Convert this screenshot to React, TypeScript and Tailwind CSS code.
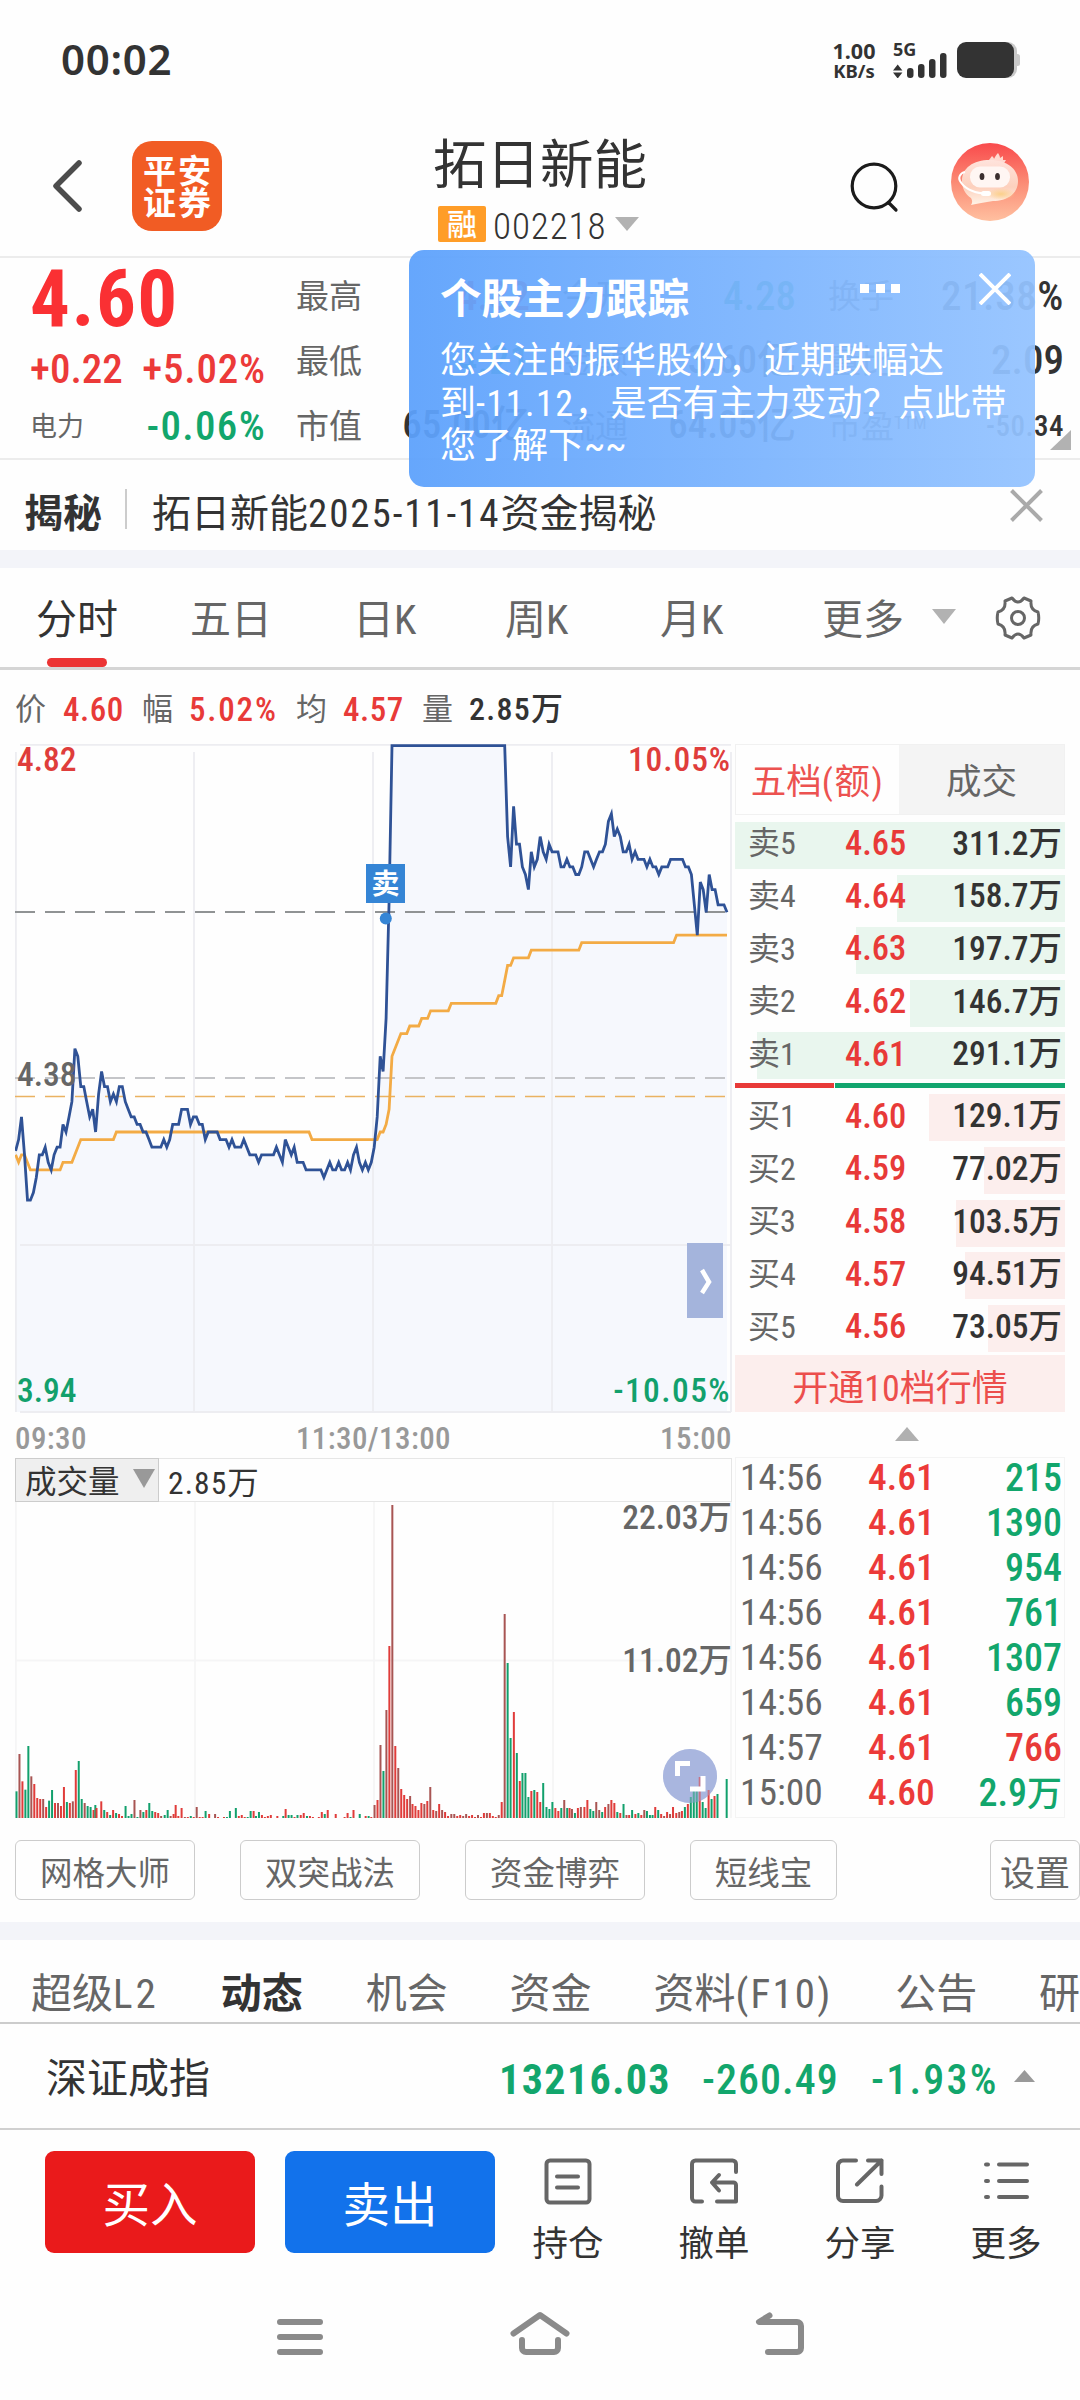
import React from "react";

type Pt = [number, number];

/* [minute of session, price in cents] */
const PRICE: Pt[] = [
  [0, 428.5], [1, 430], [2, 433], [3, 428], [4, 422], [5, 422], [6, 423], [7, 425], [8, 428], [9, 428], [10, 429], [11, 427], [12, 426], [13, 428], [14, 429], [15, 429],
  [16, 432], [17, 431], [18, 433], [19, 435], [20, 442], [21, 441], [22, 437], [23, 437], [24, 435], [25, 433], [26, 434], [27, 431], [28, 436], [29, 439], [30, 437], [31, 437],
  [32, 435], [33, 436], [34, 435], [35, 437], [36, 437], [37, 435], [38, 434], [39, 433], [40, 433], [41, 432], [42, 432], [43, 431], [44, 431], [45, 430], [46, 429], [49, 429],
  [50, 430], [51, 429], [52, 430], [53, 432], [55, 432], [56, 434], [58, 434], [59, 432], [60, 433], [61, 433], [62, 432], [63, 432], [64, 430], [65, 431], [68, 431], [69, 430],
  [71, 430], [72, 429], [73, 430], [74, 429], [76, 429], [77, 430], [78, 429], [79, 428], [81, 428], [82, 427], [83, 428], [87, 428], [88, 429], [89, 428], [90, 427], [91, 430],
  [92, 429], [93, 428], [94, 429], [95, 427], [97, 427], [98, 426], [103, 426], [104, 425], [105, 426], [106, 427], [107, 426], [108, 426], [109, 427], [110, 426], [111, 426],
  [112, 427], [113, 426], [114, 428], [115, 429], [116, 427], [117, 426], [118, 427], [119, 426], [120, 427], [121, 429], [122, 433], [123, 441], [124, 439], [125, 446],
  [126, 461.5], [127, 482], [165, 482], [166, 470], [167, 466], [168, 474], [169, 469], [170, 469], [171, 466], [172, 465], [173, 463], [174, 468], [175, 466], [176, 467],
  [177, 470], [178, 468], [179, 467], [180, 469], [181, 468], [183, 468], [184, 466], [185, 466], [186, 467], [187, 466], [188, 466], [189, 465], [190, 465], [191, 466],
  [192, 468], [193, 468], [194, 467], [195, 466], [196, 467], [197, 468], [198, 468], [199, 469], [200, 472], [201, 473], [202, 470], [203, 471], [204, 470], [205, 468],
  [206, 468], [207, 469], [208, 467], [209, 468], [210, 467], [212, 467], [213, 466], [214, 467], [215, 466], [216, 466], [217, 465], [218, 466], [220, 466], [221, 467],
  [225, 467], [226, 466], [227, 466], [228, 465], [230, 457], [231, 464], [232, 463], [233, 460], [234, 465], [235, 463], [236, 463], [237, 461], [239, 461], [240, 460],
];

const AVERAGE: Pt[] = [
  [0, 428], [1, 427], [2, 428], [3, 428], [5, 426], [15, 426], [16, 427], [19, 427], [22, 430], [33, 430], [34, 431], [99, 431], [100, 430], [122, 430], [123, 431], [124, 431],
  [125, 432], [126, 434], [127, 441], [130, 444], [132, 444], [133, 445], [136, 445], [137, 446], [139, 446], [140, 447], [146, 447], [147, 448], [162, 448], [163, 449],
  [164, 449], [165, 451], [166, 453], [167, 453], [168, 454], [173, 454], [174, 455], [190, 455], [191, 456], [222, 456], [223, 457], [240, 457],
];

/* minute, side (r up, g down, d overlapping) and height */
const VOLUME =
  "0g80 1d192 2r110 3g85 4g216 5d125 6r102 7r60 8r57 9d57 10r33 11g52 12g84 13r45 14d45 15r36 16r93 17g48 18r45 19d50 20r144 21g171 22g57 23d45 24g36 25g33 26r24 26.6g39 27r30 28.6r50 29.6g24 30.6r18 31.6g9 32.6r24 33.6g15 34.6r12 35.6r6 36.8g36 37.8g6 38.8g12 39.8d54 40.8g3 41.8d24 42.8g18 43.8r24 44.8g45 45.8g21 46.8r18 47.8r15 48.8d6 50g9 51g24 52d6 53r12 53.7r39 54.6r6 55.7r30 56.8d3 57.8r3 58.8g6 59.8r3 60.8d33 61.8r3 62.8r3 63.8g21 65r12 67d12 68r3 70r3 71g3 72g21 74g30 75r6 76r9 77r3 78g3 79g21 80r21 80.8g6 81.8g18 82.8r9 83.8r3 84.8r6 85.8r9 88r6 90g6 90.8r27 91.8g9 92.8g9 93.8r3 94.8g9 95.9r9 96.9r15 98g6 99r6 100r3 102r3 103r18 104g12 105r24 107.7r12 110.7r3 111.7r15 112.7g3 113.7r24 115.8g12 117.8r6 118.8g6 119.7r3 120.8d39 121.8r54 122.8d219 123.8g141 124.8d324 125.8r516 126.8d939 127.8r216 128.8d150 129.8r87 130.8r69 131.8r57 132.8d66 133.6r42 134.6r36 135.6r24 136.6r45 137.6d42 138.6r51 139.6d93 140.6r24 141.6d21 142.6r42 143.6d24 144.6r18 145.6r6 146.7d12 147.7d12 148.7r6 149.7r9 150.7d6 151.7d12 152.7r6 153.7r9 154.7r3 155.7d9 156.7r3 157.7r15 158.7d15 159.7r15 160.7r6 161.7r3 162.7d9 163.7r48 164.7d612 165.7g465 166.7g240 167.8r318 168.8g195 169.8r111 170.7g135 171.7g135 172.7g63 173.7r81 174.7g84 175.7r78 176.7r48 177.7g105 178.8g33 179.8g27 180.8g48 181.8r30 182.8r21 183.8g30 184.8d54 185.8g30 186.6r30 187.4d27 188.4g15 189.4r30 190.4d33 191.6r33 192.6r54 193.6g27 194.6g21 195.6d48 196.6d24 197.6g18 198.6r33 199.7d42 200.7r54 201.7r45 202.7g18 203.7r15 204.8g42 205.8d9 206.7r9 207.7g24 208.8r12 209.8g15 210.8r9 211.8d24 212.7g21 213.7g9 214.6g9 215.5r33 216.5g24 217.5r12 218.5d6 219.5r18 220.5d12 221.5r33 222.6r15 223.6d18 224.5r21 225.5g33 226.5r42 227.5g63 228.5g81 229.5g81 230.5r123 231.5g48 232.5g30 233.5r84 234.5g57 235.5r66 236.5g72 239.6g117"
    .split(" ")
    .map((s) => {
      const m = /^([\d.]+)([rgd])(\d+)$/.exec(s)!;
      return { minute: +m[1], side: m[2], height: +m[3] / 3 };
    });

const BAR_FILL: Record<string, string> = { r: "#e03c3a", g: "#12a06c", d: "#a85553" };

const px = (m: number) => 0.6 + m * 2.964;
const py = (c: number) => 335 - (c - 438) * 7.575;
const line = (pts: Pt[]) => pts.map(([m, c]) => `${px(m).toFixed(1)},${py(c).toFixed(1)}`).join(" ");

const SELL = [
  ["卖5", "4.65", "311.2万", 330],
  ["卖4", "4.64", "158.7万", 168],
  ["卖3", "4.63", "197.7万", 209],
  ["卖2", "4.62", "146.7万", 155],
  ["卖1", "4.61", "291.1万", 308],
] as const;
const BUY = [
  ["买1", "4.60", "129.1万", 136],
  ["买2", "4.59", "77.02万", 81],
  ["买3", "4.58", "103.5万", 109],
  ["买4", "4.57", "94.51万", 100],
  ["买5", "4.56", "73.05万", 77],
] as const;
const TRADES = [
  ["14:56", "4.61", "215", false],
  ["14:56", "4.61", "1390", false],
  ["14:56", "4.61", "954", false],
  ["14:56", "4.61", "761", false],
  ["14:56", "4.61", "1307", false],
  ["14:56", "4.61", "659", false],
  ["14:57", "4.61", "766", true],
  ["15:00", "4.60", "2.9万", false],
] as const;

function Triangle({ up, className }: { up?: boolean; className: string }) {
  return (
    <svg viewBox="0 0 10 10" preserveAspectRatio="none" className={className} fill="currentColor">
      <path d={up ? "M0 10L5 0L10 10Z" : "M0 0H10L5 10Z"} />
    </svg>
  );
}

function StatusBar() {
  return (
    <div className="flex h-[118px] items-center pl-[61px] pr-[59px] text-[#333]">
      <span className="font-['Noto_Sans'] text-[42px] leading-none font-semibold tracking-[0.7px]">00:02</span>
      <div className="mt-[2px] ml-auto flex w-[46px] flex-col items-center font-['Noto_Sans'] font-bold">
        <span className="text-[21.5px] leading-[20px]">1.00</span>
        <span className="text-[18.5px] leading-[19px]">KB/s</span>
      </div>
      <svg className="ml-[16px] h-[38px] w-[56px]" viewBox="0 0 56 38" fill="#333">
        <text x="0" y="15.5" fontSize="18" fontWeight="700" fontFamily="Noto Sans">5G</text>
        <path d="M0 30.5L4.7 24.500L9.400 30.500Z M0 32.500H9.400L4.700 38.500Z" />
        <rect x="14" y="28" width="6.500" height="10" rx="3" />
        <rect x="25" y="24" width="6.500" height="14" rx="3" />
        <rect x="36" y="19" width="6.500" height="19" rx="3" />
        <rect x="47" y="13" width="6.500" height="25" rx="3" />
      </svg>
      <svg className="mt-[2px] ml-[8px] h-[36px] w-[64px]" viewBox="0 0 64 36">
        <rect x="10" width="50" height="36" rx="9" fill="#c9c9c9" />
        <rect x="56" y="12" width="7" height="12" rx="2.500" fill="#c9c9c9" />
        <rect width="57" height="36" rx="9" fill="#333" />
      </svg>
    </div>
  );
}

function Assistant() {
  return (
    <svg viewBox="0 0 78 78" className="h-[78px] w-[78px]">
      <defs>
        <linearGradient id="as-bg" x1="0" y1="0" x2="0" y2="1">
          <stop offset="0" stopColor="#f94a4c" />
          <stop offset="0.500" stopColor="#fb8a74" />
          <stop offset="1" stopColor="#ffc0a0" />
        </linearGradient>
        <linearGradient id="as-head" x1="0" y1="0" x2="0" y2="1">
          <stop offset="0" stopColor="#ffe3dc" />
          <stop offset="0.600" stopColor="#fdd0bd" />
          <stop offset="1" stopColor="#fff4e8" />
        </linearGradient>
        <radialGradient id="as-glow">
          <stop offset="0" stopColor="#fbd08a" />
          <stop offset="1" stopColor="#fbd08a" stopOpacity="0" />
        </radialGradient>
      </defs>
      <circle cx="39" cy="39" r="39" fill="url(#as-bg)" />
      <path d="M37 19c1-3 3-4 4-6 1 1 2 2 2 3 1-2 2-4 4-6 1 2 2 3 2 5l3-2c0 2 0 3 0 4l3 0c-1 2-2 3-3 5z" fill="#ffd9d0" />
      <path d="M39 17C56 17 67 26 67 38C67 51 56 58 42 58C34 59 26 61 20 62C22 59 21 57 20 55C14 51 11 45 11 38C11 25 22 17 39 17Z" fill="url(#as-head)" />
      <ellipse cx="50" cy="51" rx="14" ry="6" fill="url(#as-glow)" />
      <rect x="19" y="23.500" width="40" height="21" rx="10" fill="#fff6f3" />
      <ellipse cx="31" cy="33.500" rx="2.400" ry="3.500" fill="#3b2f2f" />
      <ellipse cx="46.500" cy="33.500" rx="2.400" ry="3.500" fill="#3b2f2f" />
      <path d="M14 29C9 30 7 35 9 38C13 45 22 50 32 50.500" fill="none" stroke="#fff" strokeWidth="2" />
      <rect x="30" y="48" width="10" height="5" rx="2.500" fill="#fff" />
    </svg>
  );
}

function Header() {
  return (
    <div className="flex h-[140px] border-b-2 border-[#ececec]">
      <svg className="mt-[42px] ml-[50px] h-[52px] w-[36px]" viewBox="0 0 36 52" fill="none" stroke="#4c4c4c" strokeWidth="5.500" strokeLinecap="round" strokeLinejoin="round">
        <path d="M29 3L6 26L29 49" />
      </svg>
      <div className="mt-[23px] ml-[46px] flex h-[90px] w-[90px] flex-col items-center justify-center rounded-[20px] bg-[#f15c24] pt-[3px] pl-[2px] text-[33px] leading-[31.5px] font-bold tracking-[2px] text-white">
        <span>平安</span>
        <span>证券</span>
      </div>
      <div className="ml-[211px] w-[222px]">
        <div className="mt-[18px] text-[53.5px] leading-[60px] text-[#333]">拓日新能</div>
        <div className="mt-[10px] ml-[5px] flex h-[36px] items-center">
          <span className="flex h-[36px] w-[48px] items-center justify-center rounded-[2px] bg-[#ff9d28] pt-[2px] text-[30px] leading-none font-medium text-white">融</span>
          <span className="mt-[4px] ml-[7px] text-[37px] leading-none font-light tracking-[0.9px] text-[#333]">002218</span>
          <Triangle className="ml-[9px] h-[14px] w-[24px] shrink-0 text-[#b2b2b2]" />
        </div>
      </div>
      <svg className="mt-[43px] ml-[195px] h-[52px] w-[50px]" viewBox="0 0 50 52" fill="none" stroke="#1b1b1b" strokeWidth="3.200" strokeLinecap="round">
        <circle cx="24" cy="25" r="21.800" />
        <path d="M39 42L46 49" />
      </svg>
      <div className="mt-[25px] ml-[51px]">
        <Assistant />
      </div>
    </div>
  );
}

function Popup() {
  return (
    <div className="absolute top-[-8px] left-[409px] h-[237px] w-[626px] rounded-[15px] bg-linear-to-r from-[#5ca1fc]/94 to-[#94c3ff]/94 text-white">
      <div className="flex items-start pt-[23px] pl-[31px]">
        <span className="w-[420px] pt-[2px] text-[41.5px] leading-[50px] font-bold">个股主力跟踪</span>
        <div className="mt-[11px] flex gap-[6.5px]">
          <span className="h-[9px] w-[9px] bg-white" />
          <span className="h-[9px] w-[9px] bg-white" />
          <span className="h-[9px] w-[9px] bg-white" />
        </div>
        <svg className="ml-[79px] h-[32px] w-[32px]" viewBox="0 0 32 32" stroke="#fff" strokeWidth="4">
          <path d="M1 1L31 31M31 1L1 31" />
        </svg>
      </div>
      <div className="mt-[15px] pl-[31px] text-[36px] leading-[42.500px] whitespace-nowrap">
        <div>您关注的振华股份，近期跌幅达</div>
        <div>
          到<span className="tracking-[1.5px]">-11.12</span>，是否有主力变动？点此带
        </div>
        <div>您了解下~~</div>
      </div>
    </div>
  );
}

function Quote() {
  return (
    <div className="relative flex h-[202px] border-b-2 border-[#ececec] text-[#666]">
      <div className="ml-[30px] flex w-[236px] flex-col">
        <div className="mt-[1px] text-[79px] leading-[80px] font-bold tracking-[1.5px] text-[#fa3033]">4.60</div>
        <div className="mt-[9px] flex justify-between text-[41px] leading-[42px] font-medium text-[#ec3a39]">
          <span>+0.22</span>
          <span className="tracking-[0.8px]">+5.02%</span>
        </div>
        <div className="mt-[13px] flex items-center justify-between">
          <span className="pt-[3px] text-[27px] leading-[42px]">电力</span>
          <span className="text-[41px] leading-[42px] font-medium tracking-[1.3px] text-[#12a66c]">-0.06%</span>
        </div>
      </div>
      <div className="mt-[15px] ml-[30px] grid h-[176px] w-[768px] grid-cols-[66px_168px_32px_66px_168px_32px_66px_170px] grid-rows-[47px_65px_64px] text-[33px] leading-[47px]">
        <span>最高</span>
        <span className="text-right text-[41px] font-medium text-[#ec3a39]">4.82</span>
        <span />
        <span>今开</span>
        <span className="text-right text-[41px] font-medium text-[#12a66c]">4.28</span>
        <span />
        <span>换手</span>
        <span className="text-right text-[41px] font-medium tracking-[0.6px] text-[#333]">21.38%</span>
        <span className="pt-[18px]">最低</span>
        <span className="pt-[17px] text-right text-[41px] font-medium text-[#12a66c]">4.21</span>
        <span />
        <span className="pt-[18px]">金额</span>
        <span className="pt-[17px] text-right text-[39px] font-medium text-[#333]">3.60亿</span>
        <span />
        <span className="pt-[18px]">量比</span>
        <span className="pt-[17px] text-right text-[41px] font-medium text-[#333]">2.09</span>
        <span className="pt-[18px]">市值</span>
        <span className="pt-[17px] text-right text-[39px] font-medium whitespace-nowrap text-[#333]">65.00亿</span>
        <span />
        <span className="pt-[18px]">流通</span>
        <span className="pt-[17px] text-right text-[39px] font-medium whitespace-nowrap text-[#333]">64.05亿</span>
        <span />
        <span className="pt-[18px] whitespace-nowrap">
          市盈<sup className="text-[18px]">TTM</sup>
        </span>
        <span className="pt-[18px] text-right text-[29px] font-medium tracking-[0.5px] text-[#333]">-50.34</span>
      </div>
      <svg className="absolute top-[172px] left-[1050px] h-[20px] w-[21px]" viewBox="0 0 21 20">
        <path d="M21 0V20H0Z" fill="#b2b2b2" />
      </svg>
      <Popup />
    </div>
  );
}

function PriceChart() {
  const area = `0.6,668 ${line(PRICE)} ${px(240)},668`;
  return (
    <svg width="717" height="669" viewBox="0 0 717 669" className="font-medium">
      <polygon points={area} fill="#f6f8fd" />
      <g stroke="#ededf1" strokeWidth="1.800" fill="none">
        <path d="M5 0.900H716M5 501H716M5 668H716" />
        <path d="M0.900 8V668M179 8V668M358 8V668M537 8V668M716 8V668" />
      </g>
      <g fill="none" strokeDasharray="20 10">
        <path d="M0 168H712" stroke="#909394" strokeWidth="2" />
        <path d="M0 334H712" stroke="#c4c5c8" strokeWidth="2" />
        <path d="M0 352.500H712" stroke="#eab262" strokeWidth="1.500" />
      </g>
      <polyline points={line(AVERAGE)} fill="none" stroke="#f3ab45" strokeWidth="2.800" />
      <polyline points={line(PRICE)} fill="none" stroke="#2f5296" strokeWidth="2.800" />
      <g fontSize="33.500">
        <text x="2" y="26.500" fill="#df3d3b">4.82</text>
        <text x="716" y="26.500" fill="#df3d3b" textAnchor="end" letterSpacing="0.900">10.05%</text>
        <text x="2" y="342" fill="#666">4.38</text>
        <text x="2" y="658" fill="#12a06c">3.94</text>
        <text x="716" y="658" fill="#12a06c" textAnchor="end" letterSpacing="1.400">-10.05%</text>
      </g>
      <rect x="351" y="120" width="39" height="39" fill="#3585d5" />
      <text x="370.500" y="150" fontSize="28" fill="#fff" textAnchor="middle" fontWeight="700">卖</text>
      <circle cx="370.800" cy="174.500" r="6" fill="#3585d5" />
      <rect x="672" y="499" width="36" height="75" fill="#a4b4dc" />
      <path d="M687 526L694 538L687 549" fill="none" stroke="#fff" strokeWidth="4.500" />
    </svg>
  );
}

function VolumeChart() {
  return (
    <svg width="717" height="316" viewBox="0 0 717 316" className="font-medium">
      <path d="M0.900 0V316M180 0V316M359 0V316M538 0V316M716 0V316M0 158.500H716" stroke="#f5f5f6" strokeWidth="1.800" fill="none" />
      <circle cx="675" cy="274" r="27" fill="#a9b6df" />
      {VOLUME.map((b) => (
        <rect key={b.minute} x={0.5 + b.minute * 2.964} y={316 - b.height} width="2" height={b.height} fill={BAR_FILL[b.side]} />
      ))}
      <circle cx="675" cy="274" r="27" fill="#a9b6df" opacity="0.450" />
      <path d="M662.500 274V261.500H675M675 287H688V274" fill="none" stroke="#fff" strokeWidth="5" />
      <g fontSize="33.500" fill="#666" textAnchor="end">
        <text x="717" y="27">22.03万</text>
        <text x="717" y="170">11.02万</text>
      </g>
    </svg>
  );
}

function BookRow({ row, sell }: { row: readonly [string, string, string, number]; sell?: boolean }) {
  const [label, price, amount, width] = row;
  return (
    <div className="relative h-[47px]">
      <div className={`absolute inset-y-0 right-0 ${sell ? "bg-[#e9f6ee]" : "bg-[#fceeed]"}`} style={{ width }} />
      <div className="relative flex h-[43px] items-center pr-[3px] pl-[13px] leading-none">
        <span className="w-[97px] text-[32px] text-[#666]">{label}</span>
        <span className="text-[34.500px] font-medium text-[#e83a38]">{price}</span>
        <span className="ml-auto flex items-center text-[33.500px] font-medium text-[#333]">{amount}</span>
      </div>
    </div>
  );
}

function OrderBook() {
  return (
    <div className="ml-[3px] flex w-[330px] flex-col">
      <div className="flex h-[71px] border border-[#f1f1f1] text-[35.500px] leading-none">
        <span className="flex w-[163px] items-center justify-center pt-[7px] text-[#ec5250]">
          五档<span className="tracking-[1.5px]">(额)</span>
        </span>
        <span className="flex flex-1 items-center justify-center bg-[#f4f4f4] pt-[7px] text-[#666]">成交</span>
      </div>
      <div className="mt-[7px] flex h-[258px] flex-col justify-between">
        {SELL.map((r) => (
          <BookRow key={r[0]} row={r} sell />
        ))}
      </div>
      <div className="mt-[3px] flex h-[6px] gap-px">
        <span className="w-[99px] bg-[#e83a38]" />
        <span className="flex-1 bg-[#12a56e]" />
      </div>
      <div className="mt-[6px] flex h-[258px] flex-col justify-between">
        {BUY.map((r) => (
          <BookRow key={r[0]} row={r} />
        ))}
      </div>
      <div className="mt-[3px] flex h-[57px] items-center justify-center bg-[#fceeed] pt-[10px] text-[36px] leading-none text-[#ec4e4c]">开通10档行情</div>
      <div className="flex h-[45px] justify-center pt-[15px] pl-[14px]">
        <Triangle up className="h-[14px] w-[24px] text-[#b0b0b0]" />
      </div>
      <div className="h-[361px] border border-[#f4f4f4]">
        {TRADES.map(([t, p, v, up], i) => (
          <div key={i} className="relative top-[-2.5px] flex h-[45px] items-center pr-[2px] pl-[4px] text-[38px] leading-none">
            <span className="w-[128px] text-[37.500px] text-[#666]">{t}</span>
            <span className="text-[37.500px] font-medium text-[#ec3a39]">{p}</span>
            <span className={`ml-auto font-medium ${up ? "text-[#e83a38]" : "text-[#12a66c]"}`}>
              {v.replace("万", "")}
              {v.endsWith("万") && <span className="text-[35px]">万</span>}
            </span>
          </div>
        ))}
      </div>
    </div>
  );
}

function PeriodTabs() {
  return (
    <div className="flex h-[102px] border-b-[3px] border-[#d5d5d5] text-[41px] leading-[104px] whitespace-nowrap text-[#666]">
      <div className="relative ml-[36px] w-[154px] text-[#333]">
        分时
        <span className="absolute bottom-0 left-[11px] h-[9px] w-[60px] rounded-full bg-[#ec3434]" />
      </div>
      <span className="w-[163px]">五日</span>
      <span className="w-[152px]">日K</span>
      <span className="w-[155px]">周K</span>
      <span className="w-[162px]">月K</span>
      <span className="w-[110px]">更多</span>
      <Triangle className="mt-[41px] h-[15px] w-[24px] text-[#b2b2b2]" />
      <svg className="mt-[27px] ml-[39px] h-[46px] w-[46px]" viewBox="-23 -23 46 46" fill="none" stroke="#666" strokeWidth="3" strokeLinejoin="round">
        <path d="M-6 -20Q0 -12 6 -20L13 -17Q12 -8 20 -6Q21.500 0 20 6Q12 8 13 17L6 20Q0 12 -6 20L-13 17Q-12 8 -20 6Q-21.500 0 -20 -6Q-12 -8 -13 -17Z" />
        <circle r="6.500" />
      </svg>
    </div>
  );
}

function InfoRow() {
  return (
    <div className="flex h-[74px] items-center pt-[4px] text-[31px] leading-none text-[#666]">
      <span className="ml-[15px] w-[48px]">价</span>
      <span className="w-[79px] text-[33px] font-medium tracking-[0.5px] text-[#e83a38]">4.60</span>
      <span className="w-[47px]">幅</span>
      <span className="w-[107px] text-[33px] font-medium tracking-[1.8px] text-[#e83a38]">5.02%</span>
      <span className="w-[47px]">均</span>
      <span className="w-[79px] text-[33px] font-medium tracking-[0.5px] text-[#e83a38]">4.57</span>
      <span className="w-[47px]">量</span>
      <span className="text-[32px] font-medium tracking-[1.3px] text-[#333]">2.85万</span>
    </div>
  );
}

function ToolChip({ children, className }: { children: React.ReactNode; className: string }) {
  return <div className={`flex h-[60px] items-center justify-center rounded-[6px] border-[1.500px] border-[#ccc] pt-[8px] leading-none text-[#666] ${className}`}>{children}</div>;
}

function SectionTabs() {
  return (
    <div className="flex h-[84px] overflow-hidden border-b-2 border-[#ccc] pt-[12px] text-[41px] leading-[84px] whitespace-nowrap text-[#666]">
      <span className="ml-[31px] w-[190px]">
        超级<span className="tracking-[3px]">L2</span>
      </span>
      <span className="w-[145px] font-bold text-[#333]">动态</span>
      <span className="w-[144px]">机会</span>
      <span className="w-[144px]">资金</span>
      <span className="w-[242px]">
        资料<span className="tracking-[2.2px]">(F10)</span>
      </span>
      <span className="w-[144px]">公告</span>
      <span>研</span>
    </div>
  );
}

function IndexRow() {
  return (
    <div className="flex h-[106px] items-center border-b-2 border-[#d0d0d0] pt-[7px] text-[41px] leading-none text-[#12a66c]">
      <span className="ml-[46px] w-[453px] text-[#333]">深证成指</span>
      <span className="w-[203px] text-[42px] font-bold tracking-[1.4px]">13216.03</span>
      <span className="w-[169px] text-[42px] font-medium tracking-[1px]">-260.49</span>
      <span className="w-[143px] text-[42px] font-medium tracking-[2.2px]">-1.93%</span>
      <Triangle up className="mb-[8px] h-[12px] w-[21px] text-[#999]" />
    </div>
  );
}

const ACTIONS = [
  ["持仓", "M6 2.500H42A3.500 3.500 0 0 1 45.500 6V41A3.500 3.500 0 0 1 42 44.500H6A3.500 3.500 0 0 1 2.500 41V6A3.500 3.500 0 0 1 6 2.500ZM13 18.500H34M13 29.500H34"],
  ["撤单", "M46 14V6A3.500 3.500 0 0 0 42.500 2.500H5.500A3.500 3.500 0 0 0 2 6V40A3.500 3.500 0 0 0 5.500 43.500H12M27 43.500H46V27A2.500 2.500 0 0 0 43.500 24.500H22M29 17L22 24.500L29 32.500"],
  ["分享", "M20 2.500H7A5 5 0 0 0 2 7.500V38A5 5 0 0 0 7 43H40A5.500 5.500 0 0 0 45.500 37.500V28.500M32 2.500H45.500V16M45.500 2.500L21 26.500"],
  ["更多", "M4 6.500H6M17 6.500H45M4 23H6M17 23H45M4 39H6M17 39H45"],
] as const;

function ActionBar() {
  return (
    <div className="flex h-[143px]">
      <div className="mt-[21px] ml-[45px] flex h-[102px] w-[210px] items-center justify-center rounded-[9px] bg-[#ea1a1b] pt-[10px] text-[47.500px] leading-none text-white">买入</div>
      <div className="mt-[21px] ml-[30px] flex h-[102px] w-[210px] items-center justify-center rounded-[9px] bg-[#1272eb] pt-[10px] text-[47.500px] leading-none text-white">卖出</div>
      {ACTIONS.map(([label, d]) => (
        <div key={label} className="flex w-[146px] flex-col items-center pt-[28px]">
          <svg className="h-[48px] w-[48px]" viewBox="0 0 48 48" fill="none" stroke="#666" strokeWidth="4" strokeLinecap="round" strokeLinejoin="round">
            <path d={d} />
          </svg>
          <span className="mt-[18px] text-[35.500px] leading-[40px] text-[#333]">{label}</span>
        </div>
      ))}
    </div>
  );
}

function SystemNav() {
  return (
    <div className="flex h-[127px] items-start pt-[37px] pl-[270px]">
      <svg className="h-[50px] w-[540px]" viewBox="270 2310 540 50" fill="none" stroke="#8a8a8a" strokeWidth="6" strokeLinecap="round" strokeLinejoin="round">
        <path d="M280 2322H320M280 2337H320M280 2352H320" />
        <path d="M513.500 2333.500L540 2315L566.500 2333.500M522 2340V2348A4 4 0 0 0 526 2352H554A4 4 0 0 0 558 2348V2340" />
        <path d="M769.500 2315.500L759 2322H797A4 4 0 0 1 801 2326V2348A4 4 0 0 1 797 2352H768" />
      </svg>
    </div>
  );
}

export default function App() {
  return (
    <div className="flex h-[2400px] w-[1080px] flex-col overflow-hidden bg-[#fefefe] font-['Roboto','Noto_Sans_CJK_SC',sans-serif] [font-stretch:75%]">
      <StatusBar />
      <Header />
      <Quote />
      <div className="flex h-[90px] items-center pt-[18px] text-[39px] leading-none text-[#333]">
        <span className="ml-[24px] w-[101px] font-bold">揭秘</span>
        <span className="mb-[10px] h-[40px] w-[2px] bg-[#ccc]" />
        <span className="ml-[25px] whitespace-nowrap">
          拓日新能<span className="tracking-[1.9px]">2025-11-14</span>资金揭秘
        </span>
        <svg className="mr-[37px] mb-[18px] ml-auto h-[33px] w-[33px]" viewBox="0 0 33 33" stroke="#aaa" strokeWidth="4">
          <path d="M1.500 1.500L31.500 31.500M31.500 1.500L1.500 31.500" />
        </svg>
      </div>
      <div className="h-[18px] bg-[#f3f4f9]" />
      <PeriodTabs />
      <InfoRow />
      <div className="flex h-[1074px] pl-[15px]">
        <div className="flex w-[717px] flex-col">
          <PriceChart />
          <div className="flex h-[45px] items-center justify-between pt-[6px] text-[31px] leading-none font-medium tracking-[0.4px] text-[#999]">
            <span>09:30</span>
            <span>11:30/13:00</span>
            <span>15:00</span>
          </div>
          <div className="flex h-[44px] border border-[#e6e6e6] text-[31.500px] leading-none text-[#333]">
            <div className="-my-px -ml-px flex w-[144px] items-center border border-[#ccc] bg-[#efefef] pt-[6px] pl-[9px]">
              成交量
              <Triangle className="mb-[9px] ml-[13px] h-[19px] w-[22px] text-[#999]" />
            </div>
            <span className="ml-[9px] pt-[9px] tracking-[1.1px]">2.85万</span>
          </div>
          <VolumeChart />
        </div>
        <OrderBook />
      </div>
      <div className="mt-[22px] flex h-[60px]">
        <ToolChip className="ml-[15px] w-[180px] text-[32.500px]">网格大师</ToolChip>
        <ToolChip className="ml-[45px] w-[180px] text-[32.500px]">双突战法</ToolChip>
        <ToolChip className="ml-[45px] w-[180px] text-[32.500px]">资金博弈</ToolChip>
        <ToolChip className="ml-[45px] w-[147px] text-[32.500px]">短线宝</ToolChip>
        <ToolChip className="ml-auto w-[90px] text-[35px]">设置</ToolChip>
      </div>
      <div className="mt-[22px] h-[18px] bg-[#f3f4f9]" />
      <SectionTabs />
      <IndexRow />
      <ActionBar />
      <SystemNav />
    </div>
  );
}
